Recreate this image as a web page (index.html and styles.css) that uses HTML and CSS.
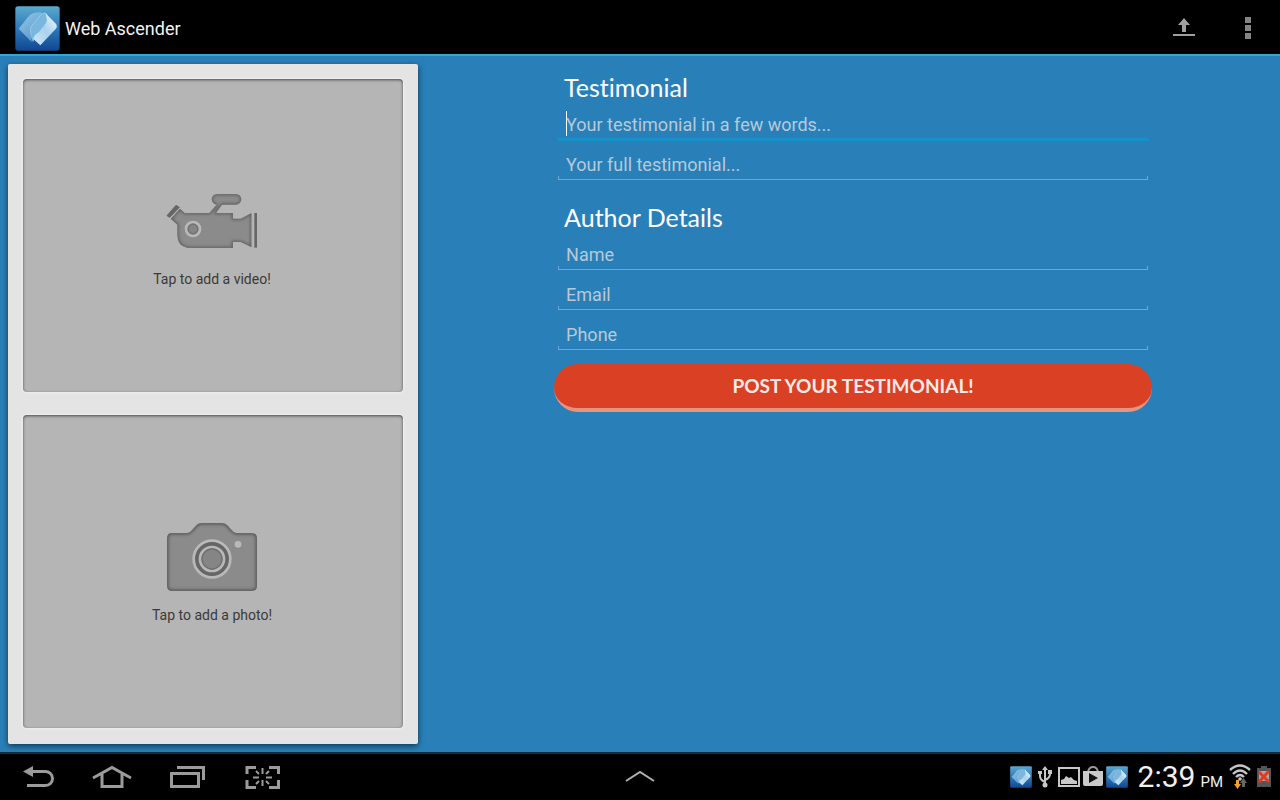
FILE: index.html
```html
<!DOCTYPE html>
<html lang="en">
<head>
<meta charset="utf-8">
<meta name="viewport" content="width=device-width, initial-scale=1">
<title>Web Ascender</title>
<link rel="stylesheet" href="styles.css">
</head>
<body>
<svg class="defs" aria-hidden="true">
  <defs>
    <linearGradient id="logo-bg" x1="0" y1="0" x2="0" y2="1"><stop offset="0" stop-color="#5ba9cf"/><stop offset=".5" stop-color="#2f79b8"/><stop offset="1" stop-color="#0f4791"/></linearGradient>
    <linearGradient id="logo-back" x1="0" y1="0" x2="1" y2="1"><stop offset="0" stop-color="#a9d3ea"/><stop offset="1" stop-color="#5b9fd6"/></linearGradient>
    <linearGradient id="logo-front" x1="1" y1="0" x2="0" y2="1"><stop offset="0" stop-color="#f4fbff"/><stop offset=".5" stop-color="#a9d2ee"/><stop offset="1" stop-color="#cfe8f7"/></linearGradient>
    <filter id="soft" x="-20%" y="-20%" width="140%" height="140%"><feGaussianBlur stdDeviation="4"/></filter>
    <symbol id="logo" viewBox="0 0 135 135">
      <rect x="1" y="1" width="133" height="133" rx="8" fill="url(#logo-bg)"/>
      <path d="M11 68 42 29Q56 17 78 19L83 25 56 62Q46 73 50 108Z" fill="url(#logo-back)" opacity=".8"/>
      <path d="M49 60 76 28Q84 20 91 21L95 24 98 44 72 78Q60 87 54 106 42 76 49 60Z" fill="#79b7df" stroke="#b9dcf0" stroke-width="1.5"/>
      <path d="M91 21 124 55Q128 62 122 69L76 118 55 99Q57 86 72 78L94 50Q98 42 91 21Z" fill="url(#logo-front)"/>
    </symbol>
    <clipPath id="video-clip"><path d="M62 116 90 86 104 99H178L200 74H201A16 16 0 0 1 201 42H258A16 16 0 0 1 258 74H216L198 99H249V116H272L305 99V202L272 186H249V204H113Q82 198 82 165V134Z"/></clipPath>
    <clipPath id="photo-clip"><path d="M66 69H112Q122 67 129 57L139 46Q145 39 156 39H214Q225 39 232 46L242 57Q249 67 259 69H305Q321 69 321 85V227Q321 243 305 243H67Q51 243 51 227V85Q51 69 66 69Z"/></clipPath>
  </defs>
</svg>
<div class="screen">
  <header class="topbar">
    <svg class="app-logo" aria-hidden="true"><use href="#logo"/></svg>
    <h1 class="app-title">Web Ascender</h1>
    <button class="action" type="button" aria-label="Upload">
      <svg width="24" height="20" viewBox="0 0 24 20" fill="#a0a0a0"><path d="M12 0 18 7H14V14H10V7H6ZM1 16H23V18H1Z"/></svg>
    </button>
    <button class="action" type="button" aria-label="More options">
      <svg width="6" height="22" viewBox="0 0 6 22" fill="#858585"><path d="M0 0H6V6H0ZM0 8H6V14H0ZM0 16H6V22H0Z"/></svg>
    </button>
  </header>

  <main class="content">
    <section class="media" aria-label="Media">
      <button class="tile" type="button">
        <svg class="tile-icon" viewBox="48 18 276 210" aria-hidden="true">
          <path d="M51 107 78 76 88 82 59 112Z" fill="#666" stroke="#666" stroke-width="3"/>
          <g clip-path="url(#video-clip)">
            <path fill="#8b8b8b" d="M48 30H324V210H48Z"/>
            <path d="M62 116 90 86 104 99H178L200 74H201A16 16 0 0 1 201 42H258A16 16 0 0 1 258 74H216L198 99H249V116H272L305 99V202L272 186H249V204H113Q82 198 82 165V134Z" fill="none" stroke="#5e5e5e" stroke-width="8" filter="url(#soft)"/>
          </g>
          <path d="M313 99H321V203H313Z" fill="#666"/>
          <circle cx="129" cy="147" r="21" fill="#777" stroke="#b9b9b9" stroke-width="8"/>
          <circle cx="129" cy="147" r="14" fill="#858585" stroke="#707070" stroke-width="3"/>
        </svg>
        <span>Tap to add a video!</span>
      </button>
      <button class="tile" type="button">
        <svg class="tile-icon" viewBox="48 36 276 210" aria-hidden="true">
          <g clip-path="url(#photo-clip)">
            <path fill="#8b8b8b" d="M48 30H324V250H48Z"/>
            <path d="M66 69H112Q122 67 129 57L139 46Q145 39 156 39H214Q225 39 232 46L242 57Q249 67 259 69H305Q321 69 321 85V227Q321 243 305 243H67Q51 243 51 227V85Q51 69 66 69Z" fill="none" stroke="#555" stroke-width="9" filter="url(#soft)"/>
          </g>
          <circle cx="186" cy="147" r="55" fill="#666" stroke="#b9b9b9" stroke-width="8"/>
          <circle cx="186" cy="147" r="36" fill="#858585" stroke="#b9b9b9" stroke-width="8"/>
          <circle cx="186" cy="147" r="30" fill="none" stroke="#707070" stroke-width="4"/>
          <circle cx="264" cy="103" r="12" fill="#b9b9b9" stroke="#7c7c7c" stroke-width="2"/>
        </svg>
        <span>Tap to add a photo!</span>
      </button>
    </section>

    <div class="form-area">
      <form class="form">
        <h2 class="heading">Testimonial</h2>
        <input class="field field-active" type="text" aria-label="Short testimonial" placeholder="Your testimonial in a few words...">
        <input class="field" type="text" aria-label="Full testimonial" placeholder="Your full testimonial...">
        <h2 class="heading heading-next">Author Details</h2>
        <input class="field" type="text" aria-label="Name" placeholder="Name">
        <input class="field" type="email" aria-label="Email" placeholder="Email">
        <input class="field" type="tel" aria-label="Phone" placeholder="Phone">
        <button class="submit" type="submit">POST YOUR TESTIMONIAL!</button>
      </form>
    </div>
  </main>

  <footer class="navbar">
    <div class="nav-keys">
      <button class="key" type="button" aria-label="Back"><svg viewBox="0 0 40 24"><path d="M10 20.500H28.500A7 7 0 0 0 28.500 6.500H15" fill="none" stroke="#9b9b9b" stroke-width="3"/><path d="M6 6.500 16 1V12Z" fill="#9b9b9b"/></svg></button>
      <button class="key" type="button" aria-label="Home"><svg viewBox="0 0 40 24"><path d="M1 13 20 2.500 39 13M10 9V21.500H30V9" fill="none" stroke="#9b9b9b" stroke-width="3"/></svg></button>
      <button class="key" type="button" aria-label="Recent apps"><svg viewBox="0 0 40 24"><path d="M4.500 8.500H31.500V21.500H4.500ZM10 2.500H36.500V15" fill="none" stroke="#9b9b9b" stroke-width="3"/></svg></button>
      <button class="key" type="button" aria-label="Screenshot"><svg viewBox="0 0 40 24"><path d="M5 9V2.500H14M27 2.500H36.500V9M36.500 15V22.500H27M14 22.500H5V15" fill="none" stroke="#9b9b9b" stroke-width="3"/><path d="M20.500 3V9M20.500 15V21M11 12.500H17M24 12.500H30M14 6 17 9M27 6 24 9M14 19 17 16M27 19 24 16" stroke="#9b9b9b" stroke-width="2"/></svg></button>
    </div>
    <button class="key" type="button" aria-label="Show tray"><svg viewBox="0 0 40 24"><path d="M6 16 20 7 34 16" fill="none" stroke="#b0b0b0" stroke-width="2"/></svg></button>
    <div class="status">
      <svg class="mini-logo" aria-hidden="true"><use href="#logo"/></svg>
      <svg width="22" height="22" viewBox="0 0 22 22" fill="none" stroke="#c8c8c8" stroke-width="2" aria-hidden="true"><path d="M11 3V20M11 16Q6 14 6 10V8M11 14Q16 12 16 8V6"/><path d="M11 0 14 4H8ZM4 5H8V8H4ZM14 4H18V8H14Z" fill="#c8c8c8" stroke="none"/><circle cx="11" cy="19" r="2.500" fill="#c8c8c8" stroke="none"/></svg>
      <svg width="22" height="22" viewBox="0 0 22 22" aria-hidden="true"><path d="M1 2H21V20H1Z" fill="none" stroke="#c8c8c8" stroke-width="2"/><path d="M3 18V14L6 13 8 10 11 12 13 11 16 14 19 15V18Z" fill="#c8c8c8"/></svg>
      <svg width="22" height="22" viewBox="0 0 22 22" aria-hidden="true"><path d="M6 6Q7 1 11 1T16 6" fill="none" stroke="#9a9a9a" stroke-width="2"/><path d="M1 5H21V18Q21 20 19 20H3Q1 20 1 18Z" fill="#cacaca"/><path d="M7 7 16 12 7 17Z" fill="#111"/></svg>
      <svg class="mini-logo" aria-hidden="true"><use href="#logo"/></svg>
      <div class="clock"><span>2:39</span><span class="meridiem">PM</span></div>
      <svg width="22" height="26" viewBox="0 0 22 26" aria-hidden="true"><path d="M1 6Q11-3 21 6M4 10Q11 3 18 10M7 13Q11 9 15 13" fill="none" stroke="#c6c6c6" stroke-width="2.400"/><circle cx="11" cy="15" r="1.800" fill="#c6c6c6"/><path d="M7 16H10V20H12L8.500 25 5 20H7Z" fill="#f6a12b"/><path d="M13 23V19H11L14.500 14 18 19H16V23Z" fill="#666"/></svg>
      <svg class="battery" width="14" height="22" viewBox="0 0 14 22" aria-hidden="true"><path d="M4 0H10V2H14V21H0V2H4Z" fill="#555"/><path d="M2 5H12V15H2Z" fill="#a8a8a8"/><path d="M2 6 12 16M12 5 2 16" stroke="#e6391f" stroke-width="3"/></svg>
    </div>
  </footer>
</div>
</body>
</html>
```
FILE: styles.css
```css
* { box-sizing: border-box; }

body {
  margin: 0;
  background: #2980b9;
  color: #fff;
  font-family: Roboto, "Liberation Sans", sans-serif;
}

button {
  border: 0;
  padding: 0;
  background: none;
  color: inherit;
  font: inherit;
  cursor: pointer;
}

.defs { position: absolute; width: 0; height: 0; }

.screen {
  display: flex;
  flex-direction: column;
  min-height: 100vh;
}

.topbar {
  display: flex;
  align-items: center;
  height: 56px;
  padding: 2px 0 0 15px;
  background: #000;
  border-bottom: 2px solid #33a5d8;
}

.app-logo { width: 45px; height: 45px; }

.app-title {
  flex: 1;
  margin: 2px 0 0 5px;
  font-size: 18px;
  font-weight: 400;
  line-height: 24px;
  color: #f3f3f3;
}

.action {
  display: flex;
  align-items: center;
  justify-content: center;
  width: 64px;
  height: 52px;
}

.content {
  display: flex;
  flex: 1;
  gap: 8px;
  padding: 8px 0 8px 8px;
}

.media {
  display: flex;
  flex-direction: column;
  gap: 23px;
  width: 410px;
  padding: 15px 15px 16px;
  background: #e4e4e4;
  border-radius: 2px;
  box-shadow: 0 2px 6px rgba(0, 0, 0, 0.6);
}

.tile {
  display: flex;
  flex: 1;
  flex-direction: column;
  align-items: center;
  justify-content: center;
  gap: 13px;
  padding: 4px 2px 0 0;
  background: #b5b5b5;
  border-radius: 4px;
  box-shadow: inset 0 1px 3px rgba(0, 0, 0, 0.6), 0 0 2px 1px #efefef;
  color: #3a3a3a;
  font-size: 14px;
  line-height: 20px;
}

.tile-icon { width: 92px; height: 70px; }

.form-area { flex: 1; }

.form {
  display: flex;
  flex-direction: column;
  width: 70%;
  margin: 0 auto;
}

.heading {
  margin: 7px 10px 1px;
  font-family: Lato, "Noto Sans", sans-serif;
  font-size: 25px;
  font-weight: 400;
  font-variant-ligatures: none;
  line-height: 32px;
}

.heading-next { margin-top: 17px; }

.field {
  width: 100%;
  height: 40px;
  padding: 0 12px;
  border: 0;
  outline: 0;
  background:
    linear-gradient(#6aa8d6, #6aa8d6) 4px 35px / calc(100% - 8px) 1px no-repeat,
    linear-gradient(#6aa8d6, #6aa8d6) 4px 32px / 1px 4px no-repeat,
    linear-gradient(#6aa8d6, #6aa8d6) right 4px top 32px / 1px 4px no-repeat;
  color: #fff;
  font: 18px/24px Roboto, "Liberation Sans", sans-serif;
}

.field::placeholder { color: #b7c9d8; opacity: 1; }

.field-active {
  background:
    linear-gradient(#fff, #fff) 12px 7px / 1px 25px no-repeat,
    linear-gradient(#1590c8, #1590c8) center 34px / calc(100% - 6px) 3px no-repeat;
}

.submit {
  height: 48px;
  margin-top: 10px;
  background: #d94024;
  border-bottom: 4px solid #e8937f;
  border-radius: 24px;
  color: #fbeae6;
  font-family: Lato, "Noto Sans", sans-serif;
  font-size: 19px;
  font-weight: 700;
  line-height: 24px;
}

.navbar {
  display: grid;
  grid-template-columns: 1fr auto 1fr;
  align-items: center;
  height: 48px;
  padding: 0 9px;
  background: #000;
  border-top: 2px solid #0b2f47;
}

.nav-keys { display: flex; gap: 35px; padding-left: 8px; }

.key { width: 40px; height: 24px; }

.key svg { display: block; width: 40px; height: 24px; }

.status {
  display: flex;
  align-items: center;
  justify-content: flex-end;
  gap: 2px;
}

.mini-logo { width: 22px; height: 22px; }

.battery { margin-left: 4px; }

.clock {
  display: flex;
  align-items: baseline;
  gap: 5px;
  margin: 0 4px 0 8px;
  padding-top: 4px;
  color: #f0f0f0;
  font-size: 30px;
  line-height: 36px;
}

.meridiem { font-size: 15px; }
```
